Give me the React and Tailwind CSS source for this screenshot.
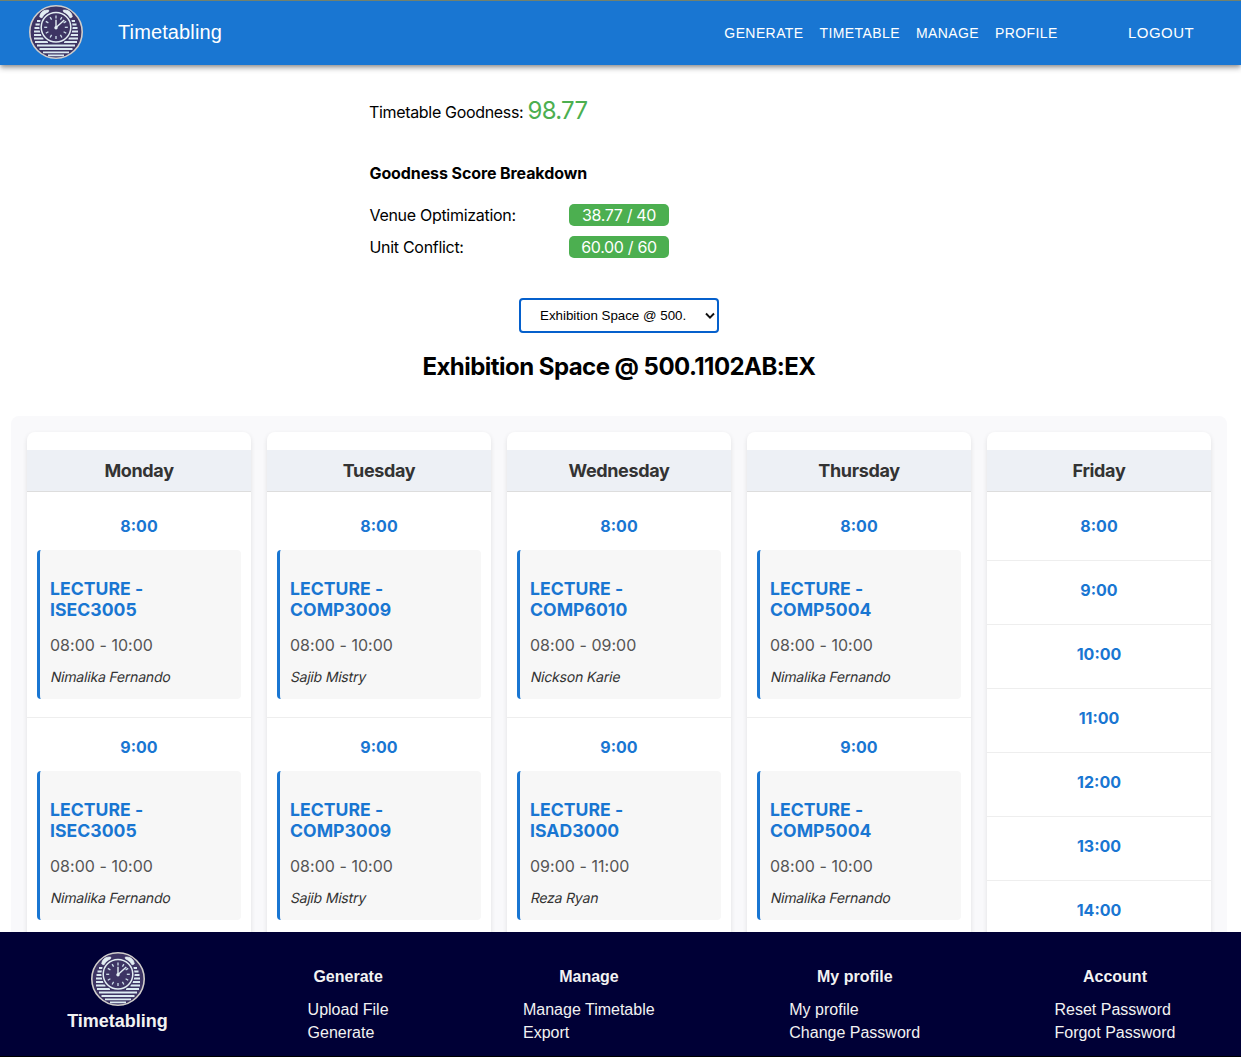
import React from "react";

const days = [
  { name: "Monday", slots: [["ISEC3005", "08:00 - 10:00", "Nimalika Fernando"], ["ISEC3005", "08:00 - 10:00", "Nimalika Fernando"]] },
  { name: "Tuesday", slots: [["COMP3009", "08:00 - 10:00", "Sajib Mistry"], ["COMP3009", "08:00 - 10:00", "Sajib Mistry"]] },
  { name: "Wednesday", slots: [["COMP6010", "08:00 - 09:00", "Nickson Karie"], ["ISAD3000", "09:00 - 11:00", "Reza Ryan"]] },
  { name: "Thursday", slots: [["COMP5004", "08:00 - 10:00", "Nimalika Fernando"], ["COMP5004", "08:00 - 10:00", "Nimalika Fernando"]] },
  { name: "Friday", slots: [null, null, null, null, null, null, null] },
];

const ticks = [0, 30, 60, 90, 120, 150, 180, 210, 240, 270, 300, 330];

function Logo() {
  return (
    <svg viewBox="0 0 54 54" className="block h-[54px] w-[54px] shrink-0">
      <circle cx="27" cy="27" r="26.2" fill="#3d3463" stroke="#d0cdcb" strokeWidth="1.6" />
      <g stroke="#dceaf2" strokeWidth="2">
        <path d="M8 16h3.500M42.500 16h3.500M6.500 19.500h4.500M43 19.500h4.500M5.500 23h5.500M43 23h5.500M5 26.500h6.500M42.500 26.500h6.500M5 30h7.500M41.500 30h7.500M5 33.500h9.500M39.500 33.500h9.500M6 37h13M35 37h13" />
        <path d="M8 40.500h38M10.500 44h33M14 47.300h26M19 50.300h16" strokeWidth="1.8" />
      </g>
      <circle cx="27" cy="22.300" r="16.600" fill="#3d3463" />
      <path d="M10.800 12C11 7.500 14.500 4.500 19.800 5.200L19.500 6.800C16.500 8.200 14.500 10 13 12.800zM43.200 12C43 7.500 39.500 4.500 34.200 5.200L34.500 6.800C37.500 8.200 39.500 10 41 12.800z" fill="#e3eef3" stroke="#e3eef3" strokeWidth="0.800" />
      <circle cx="27" cy="22.300" r="14.800" fill="#3d3463" stroke="#e3eef3" strokeWidth="1.5" />
      {ticks.map((a) => (
        <path key={a} d="M27 10.500v3" stroke="#cfe0ec" strokeWidth="1.300" transform={`rotate(${a} 27 22.3)`} />
      ))}
      <path d="M27 22V14.800M26.800 22.800L35.300 15" stroke="#e3eef3" strokeWidth="1.400" />
      <circle cx="27" cy="22.700" r="1.700" fill="#e3eef3" />
    </svg>
  );
}

function Header() {
  return (
    <header className="relative z-10 flex h-[65px] items-center border-t border-[#73816c] bg-[#1976d2] pl-[29px] pr-[47px] font-['Liberation_Sans',sans-serif] text-white shadow-[0_2px_4px_-1px_rgba(0,0,0,0.3),0_4px_5px_0_rgba(0,0,0,0.16),0_1px_8px_0_rgba(0,0,0,0.12)]">
      <div className="-mt-[2px]"><Logo /></div>
      <span className="ml-[35px] -mt-[2px] text-[20px] tracking-[0.12px]">Timetabling</span>
      <nav className="ml-auto flex gap-4 text-[14px] tracking-[0.4px]">
        <a>GENERATE</a><a>TIMETABLE</a><a>MANAGE</a><a>PROFILE</a>
      </nav>
      <a className="ml-[70.400px] text-[15px] tracking-[0.43px]">LOGOUT</a>
    </header>
  );
}

function Score({ label, value }) {
  return (
    <div className="flex h-[22px] items-center">
      <span className="w-[200px] pl-[0.500px] tracking-[-0.3px]">{label}</span>
      <span className="h-[22px] w-[100px] rounded-[5px] bg-[#4caf50] text-center leading-[22px] tracking-[-0.33px] text-white">{value}</span>
    </div>
  );
}

function Lecture({ data }) {
  return (
    <div className="mx-[10px] mt-3 mb-[18px] h-[149px] rounded-[4px] border-l-[3px] border-[#1976d2] bg-[#f7f7f7] pl-[10px] pt-[28px]">
      <h3 className="text-[17.6px] font-bold leading-[21px] tracking-[0.03px] text-[#1976d2]">LECTURE -<br />{data[0]}</h3>
      <p className="mt-[15px] text-[16px] leading-[20px] tracking-[0.03px] text-[#555]">{data[1]}</p>
      <p className="ml-[0.500px] mt-3 w-fit -skew-x-12 text-[14px] leading-[20px] tracking-[-0.19px] text-[#333]">{data[2]}</p>
    </div>
  );
}

function Day({ day }) {
  return (
    <section className="min-w-0 flex-1 self-stretch overflow-hidden rounded-[8px] bg-white pt-[18px] shadow-[0_2px_5px_rgba(0,0,0,0.1)]">
      <h2 className="mb-[5px] h-[42px] border-b border-[#ddd] bg-[#edf0f5] text-center text-[18px] font-bold leading-[41px] tracking-[-0.35px] text-[#333]">{day.name}</h2>
      {day.slots.map((s, i) => (
        <div key={i} className="border-b border-[#eee] pt-[17px]">
          <p className="text-center text-[16px] font-bold leading-6 text-[#1976d2]">{i + 8}:00</p>
          {s ? <Lecture data={s} /> : <div className="h-[22px]" />}
        </div>
      ))}
    </section>
  );
}

const links = [
  { title: "Generate", items: ["Upload File", "Generate"], box: "w-[81px] ml-[139.6px]" },
  { title: "Manage", items: ["Manage Timetable", "Export"], box: "w-[132px] ml-[134.4px]" },
  { title: "My profile", items: ["My profile", "Change Password"], box: "w-[131px] ml-[134.3px]" },
  { title: "Account", items: ["Reset Password", "Forgot Password"], box: "w-[121px] ml-[134.2px]" },
];

function Footer() {
  return (
    <footer className="relative z-10 flex h-[125px] shrink-0 border-b border-black bg-[#000036] pl-[67px] pt-5 font-['Liberation_Sans',sans-serif] text-[#f2f2f2]">
      <div className="flex w-[101px] flex-col items-center">
        <Logo />
        <span className="mt-[3px] whitespace-nowrap text-[18px] font-bold leading-6">Timetabling</span>
      </div>
      {links.map((l) => (
        <div key={l.title} className={`${l.box} shrink-0 whitespace-nowrap pt-[13px] text-[16px] leading-[23px]`}>
          <h4 className="mb-[10px] text-center font-bold">{l.title}</h4>
          {l.items.map((t) => <p key={t}>{t}</p>)}
        </div>
      ))}
    </footer>
  );
}

export default function App() {
  return (
    <div className="flex h-[1057px] w-[1241px] flex-col overflow-hidden bg-white font-['Inter',sans-serif] text-black">
      <Header />
      <main className="min-h-0 flex-1 overflow-hidden pl-[11px] pr-[14px]">
        <div className="ml-[358px] h-[193px] pt-[27px] text-[16px]">
          <p className="h-9 leading-[36px] tracking-[-0.33px]">Timetable Goodness: <span className="relative top-px text-[24px] tracking-[-0.7px] text-[#4caf50]">98.77</span></p>
          <h4 className="mb-[19px] mt-[33px] pl-[0.5px] font-bold leading-6 tracking-[-0.1px]">Goodness Score Breakdown</h4>
          <div className="flex flex-col gap-[10px]">
            <Score label="Venue Optimization:" value="38.77 / 40" />
            <Score label="Unit Conflict:" value="60.00 / 60" />
          </div>
        </div>
        <button className="mx-auto mt-10 flex h-[35px] w-[200px] items-center justify-between rounded-[4px] border-2 border-[#0560cc] bg-white pl-[19px] pr-[2px] font-['Liberation_Sans',sans-serif] text-[13.333px]">
          <span>Exhibition Space @ 500.</span>
          <svg viewBox="0 0 10 8" className="h-2 w-[10px]"><path d="M1 1.500L5 5.700L9 1.500" fill="none" stroke="#111" strokeWidth="1.9" /></svg>
        </button>
        <h1 className="mt-[18px] text-center text-[24px] font-bold leading-8 tracking-[-0.54px]">Exhibition Space @ 500.1102AB:EX</h1>
        <div className="mt-[33px] flex gap-4 rounded-[8px] bg-[#f9f9fb] p-4">
          {days.map((d) => <Day key={d.name} day={d} />)}
        </div>
      </main>
      <Footer />
    </div>
  );
}
